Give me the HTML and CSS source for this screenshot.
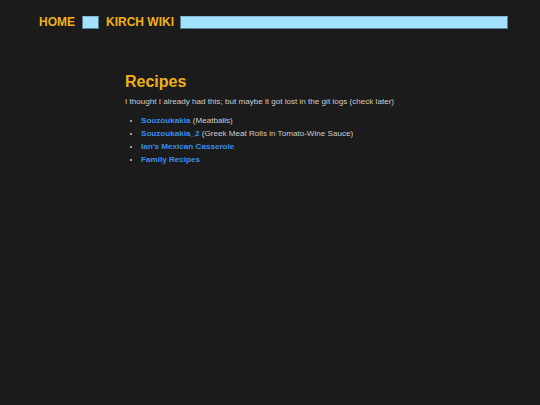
FILE: index.html
```html
<!DOCTYPE html>
<html>
<head>
<meta charset="utf-8">
<link rel="stylesheet" href="styles.css">
</head>
<body>
<header class="nav">
  <a class="nav-link" href="#">HOME</a>
  <span class="nav-box small"></span>
  <a class="nav-link" href="#">KIRCH WIKI</a>
  <span class="nav-box wide"></span>
</header>
<main class="content">
  <h1 class="title">Recipes</h1>
  <p class="intro">I thought I already had this; but maybe it got lost in the git logs (check later)</p>
  <ul class="list">
    <li><a href="#">Souzoukakia</a> (Meatballs)</li>
    <li><a href="#">Souzoukakia_2</a> (Greek Meat Rolls in Tomato-Wine Sauce)</li>
    <li><a href="#">Ian's Mexican Casserole</a></li>
    <li><a href="#">Family Recipes</a></li>
  </ul>
</main>
</body>
</html>
```

FILE: styles.css
```css
html, body {
  margin: 0;
  padding: 0;
  background: #1b1b1b;
  font-family: "Liberation Sans", Arial, sans-serif;
  color: #cccccc;
  height: 100%;
}
.nav {
  display: flex;
  align-items: center;
  gap: 7px;
  padding: 15px 32px 0 39px;
}
.nav-link {
  color: #f0b114;
  font-weight: bold;
  font-size: 12px;
  text-decoration: none;
  line-height: 14px;
}
.nav-box {
  display: block;
  height: 13px;
  box-sizing: border-box;
  background: #a2e1ff;
  border: 1px solid #5b7d8c;
  border-top-color: #86b9d1;
}
.nav-box.small { width: 17px; }
.nav-box.wide { flex: 1; margin-left: -1px; }
.content {
  margin: 0 0 0 125px;
  padding-top: 44px;
  width: 300px;
}
.title {
  color: #f0b114;
  font-size: 16px;
  font-weight: bold;
  margin: 0 0 5px 0;
  line-height: 18px;
}
.intro {
  font-size: 8.1px;
  margin: 0 0 6px 0;
  line-height: 12px;
}
.list {
  margin: 0;
  padding-left: 16px;
  font-size: 8.1px;
  line-height: 13px;
  list-style: disc;
}
.list a {
  color: #3a8ee8;
  font-weight: bold;
  text-decoration: none;
}
```
